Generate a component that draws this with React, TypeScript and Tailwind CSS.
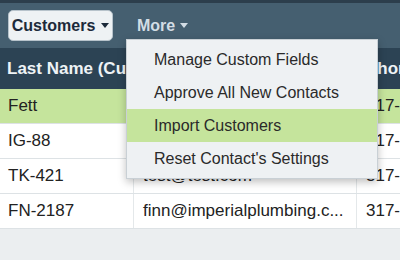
const rows = [
  { name: 'Fett', email: 'fett@test.com', phone: '317-555-0101', active: true },
  { name: 'IG-88', email: 'ig88@test.com', phone: '317-555-0102' },
  { name: 'TK-421', email: 'test@test.com', phone: '317-555-0103' },
  { name: 'FN-2187', email: 'finn@imperialplumbing.c...', phone: '317-555-0104' },
]

const menuItems = [
  'Manage Custom Fields',
  'Approve All New Contacts',
  'Import Customers',
  "Reset Contact's Settings",
]

const Caret = ({ className }: { className: string }) => (
  <svg width="8" height="5" viewBox="0 0 8 5" className={className}>
    <path d="M0 0h8L4 5z" fill="currentColor" />
  </svg>
)

export default function App() {
  return (
    <div
      className="relative w-[400px] h-[260px] overflow-hidden bg-[#ebeef0]"
      style={{ fontFamily: '"Liberation Sans", Arial, sans-serif' }}
    >
      <div className="h-[48px] bg-[#455f70] border-t-[3px] border-[#2c3e4c] flex items-center gap-6 pl-2">
        <button className="h-[31px] w-[105px] flex items-center justify-center gap-[6px] rounded-[5px] bg-[#eef2f4] border border-[#b7c3cb] text-[#1c2a3a] font-bold text-[16px]">
          Customers
          <Caret className="text-[#1c2a3a]" />
        </button>
        <button className="flex items-center gap-[5px] text-[#d3dde5] font-bold text-[16px]">
          More
          <Caret className="text-[#d3dde5]" />
        </button>
      </div>

      <div className="flex h-[41px] bg-[#2c4354] text-[#eef3f6] font-bold text-[17px] items-center">
        <div className="w-[134px] shrink-0 pl-[7px] whitespace-nowrap overflow-hidden">Last Name (Customer)</div>
        <div className="w-[223px] shrink-0 pl-[9px]">Email</div>
        <div className="pl-[9px] whitespace-nowrap">Phone</div>
      </div>

      {rows.map((r) => (
        <div
          key={r.name}
          className={`flex h-[35px] items-center text-[17px] text-[#222] border-b border-[#dde2e5] ${
            r.active ? 'bg-[#c5e49c]' : 'bg-white'
          }`}
        >
          <div className="w-[134px] shrink-0 h-full flex items-center pl-[8px] border-r border-[#e4e8ea]">{r.name}</div>
          <div className="w-[223px] shrink-0 h-full flex items-center pl-[9px] border-r border-[#e4e8ea] whitespace-nowrap overflow-hidden">
            {r.email}
          </div>
          <div className="pl-[9px] whitespace-nowrap">{r.phone}</div>
        </div>
      ))}

      <div className="absolute left-[126px] top-[39px] w-[252px] bg-[#eef1f3] border border-[#c9d0d5] shadow-[0_3px_8px_rgba(0,0,0,0.25)] py-[3px]">
        {menuItems.map((item, i) => (
          <div
            key={item}
            className={`h-[33px] flex items-center pl-[27px] text-[16px] text-[#2a2a2a] ${
              i === 2 ? 'bg-[#c5e49c]' : ''
            }`}
          >
            {item}
          </div>
        ))}
      </div>
    </div>
  )
}
